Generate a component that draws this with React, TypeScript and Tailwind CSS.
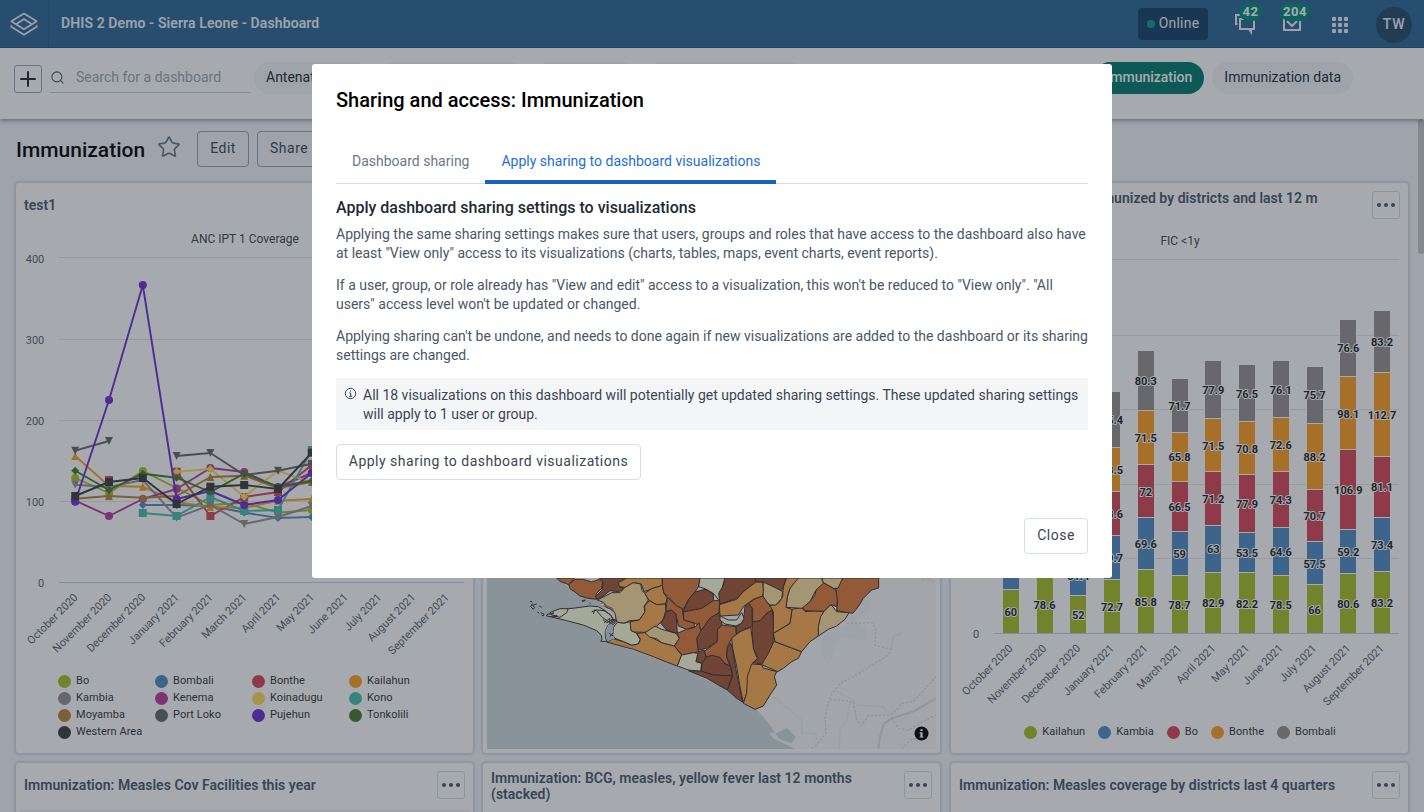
import type { ReactNode } from 'react';
import { Search, Star, Plus } from 'lucide-react';

const MONTHS = [
  'October 2020', 'November 2020', 'December 2020', 'January 2021', 'February 2021', 'March 2021',
  'April 2021', 'May 2021', 'June 2021', 'July 2021', 'August 2021', 'September 2021',
];

type Shape = 'circle' | 'diamond' | 'square' | 'up' | 'down';
type Series = { name: string; color: string; shape: Shape; ys: (number | null)[] };

const SERIES: Series[] = [
  { name: 'Bo', color: '#a8bf24', shape: 'circle', ys: [478, 493, 471, 488, 505, 502.7, 512.7, 510] },
  { name: 'Bombali', color: '#518cc3', shape: 'diamond', ys: [null, null, 505, 505, 506, 512.5, 518, 517] },
  { name: 'Bonthe', color: '#d74554', shape: 'square', ys: [null, 480, null, 471.7, 516, 497, 492, 465] },
  { name: 'Kailahun', color: '#ff9e21', shape: 'up', ys: [456, 486, 486.7, 502, 507, 508, 500.7, 499] },
  { name: 'Kambia', color: '#968f8f', shape: 'down', ys: [484.7, 487, 480, 517.7, 505, 524, 517, 506] },
  { name: 'Kenema', color: '#ba3ba1', shape: 'circle', ys: [500.7, 516, 499, 489, 468, 472, 487, 473] },
  { name: 'Koinadugu', color: '#ffda54', shape: 'diamond', ys: [null, null, null, 471.7, 469, 496.7, 470.7, 483] },
  { name: 'Kono', color: '#45beae', shape: 'square', ys: [null, null, 513, 516, 497, 511, 510, 450] },
  { name: 'Moyamba', color: '#b98037', shape: 'up', ys: [498.7, 496, 497.7, 496, 477, 475.7, 488, 482] },
  { name: 'Port Loko', color: '#676767', shape: 'down', ys: [450.7, 441, null, 456, 453, 475, 470.7, 463.7] },
  { name: 'Pujehun', color: '#6b2dd4', shape: 'circle', ys: [501.7, 400, 285, 499, 491, 505, 500, 473] },
  { name: 'Tonkolili', color: '#47792c', shape: 'diamond', ys: [470.7, 490, 473.7, 477.7, 492, 473.7, 486.7, 480.7] },
  { name: 'Western Area', color: '#3d3d3d', shape: 'square', ys: [496, 482, 478, 504, 486.7, 485, 489, 452.7] },
];

const STACK_COLORS = ['#a8bf24', '#518cc3', '#d74554', '#ff9e21', '#968f8f'];
const STACKS: number[][] = [
  [60, 50], [78.6, 60], [52, 51.4], [72.7, 59.7, 58.6, 58.5, 75.4],
  [85.8, 69.6, 72, 71.5, 80.3], [78.7, 59, 66.5, 65.8, 71.7], [82.9, 63, 71.2, 71.5, 77.9],
  [82.2, 53.5, 77.9, 70.8, 76.5], [78.5, 64.6, 74.3, 72.6, 76.1], [66, 57.5, 70.7, 88.2, 75.7],
  [80.6, 59.2, 106.9, 98.1, 76.6], [83.2, 73.4, 81.1, 112.7, 83.2],
];
const UNIT = 0.7465;

function marker(shape: Shape, x: number, y: number, color: string, key: string) {
  if (shape === 'circle') return <circle key={key} cx={x} cy={y} r={4} fill={color} />;
  if (shape === 'square') return <rect key={key} x={x - 4} y={y - 4} width={8} height={8} fill={color} />;
  const pts =
    shape === 'diamond'
      ? `${x},${y - 4} ${x + 4},${y} ${x},${y + 4} ${x - 4},${y}`
      : shape === 'up'
        ? `${x},${y - 4} ${x + 4},${y + 4} ${x - 4},${y + 4}`
        : `${x - 4},${y - 4} ${x + 4},${y - 4} ${x},${y + 4}`;
  return <polygon key={key} points={pts} fill={color} />;
}

function linePath(ys: (number | null)[]) {
  let d = '';
  let pen = false;
  ys.forEach((y, i) => {
    if (y === null) {
      pen = false;
      return;
    }
    d += `${pen ? 'L' : 'M'}${75.2 + i * 33.8} ${y}`;
    pen = true;
  });
  return d;
}

function MonthLabels({ x0, y }: { x0: number; y: number }) {
  return (
    <g fontSize={11} fill="#5c6068" textAnchor="end">
      {MONTHS.map((m, i) => (
        <text key={m} transform={`translate(${x0 + i * 33.75} ${y}) rotate(-45)`}>{m}</text>
      ))}
    </g>
  );
}

function LineChart() {
  return (
    <svg className="block h-[446px] w-[457px] shrink-0" viewBox="16 225 457 446">
      <text x={245} y={243} fontSize={12} fill="#444" textAnchor="middle">ANC IPT 1 Coverage</text>
      {[257.5, 339.5, 420.5, 501.5].map((y) => (
        <path key={y} d={`M59 ${y}H464`} stroke="#e6e6e6" />
      ))}
      <path d="M59 582.5H464" stroke="#c3cfea" />
      <g fontSize={11} fill="#5c6068" textAnchor="end">
        {['400', '300', '200', '100', '0'].map((t, i) => (
          <text key={t} x={44.3} y={262.7 + i * 81}>{t}</text>
        ))}
      </g>
      {SERIES.map((s) => (
        <g key={s.name}>
          <path d={linePath(s.ys)} fill="none" stroke={s.color} strokeWidth={1.9} strokeLinejoin="round" />
          {s.ys.map((y, i) => (y === null ? null : marker(s.shape, 75.2 + i * 33.8, y, s.color, `${i}`)))}
        </g>
      ))}
      <MonthLabels x0={78.5} y={598} />
    </svg>
  );
}

function StackedChart() {
  return (
    <svg className="block h-[495px] w-[457px] shrink-0" viewBox="951 225 457 495">
      <text x={1180} y={245} fontSize={12} fill="#444" textAnchor="middle">FIC &lt;1y</text>
      {[259.5, 335.5, 409.5, 484.5, 558.5].map((y) => (
        <path key={y} d={`M994 ${y}H1399`} stroke="#e6e6e6" />
      ))}
      {STACKS.map((col, i) => {
        const x = Math.round(1002.99 + i * 33.75);
        let base = 633.5;
        return (
          <g key={i}>
            {col.map((v, j) => {
              const top = base - v * UNIT;
              const snapped = Math.round(top) + 0.5;
              const bottom = Math.round(base) + 0.5;
              base = top;
              return (
                <rect key={j} x={x - 0.5} y={snapped} width={17} height={Math.min(bottom, 633.5) - snapped} fill={STACK_COLORS[j]} stroke="#fff" strokeWidth={1} />
              );
            })}
          </g>
        );
      })}
      <path d="M994 633.5H1399" stroke="#c3cfea" />
      <g fontSize={11} fontWeight={700} fill="#222" stroke="#fff" strokeWidth={2} strokeLinejoin="round" textAnchor="middle" paintOrder="stroke">
        {STACKS.map((col, i) => {
          let base = 633.5;
          return col.map((v, j) => {
            const h = v * UNIT;
            base -= h;
            return <text key={`${i}-${j}`} x={1010.8 + i * 33.75} y={base + h / 2 + 4.9}>{v}</text>;
          });
        })}
      </g>
      <text x={979.3} y={638} fontSize={11} fill="#5c6068" textAnchor="end">0</text>
      <MonthLabels x0={1013.5} y={649} />
    </svg>
  );
}

const DARK = '#a65834';
const BROWN = '#df7b39';
const ORANGE = '#fdac4f';
const TAN = '#fdde9c';
const PALE = '#fdffd9';

const REGIONS: [string, string][] = [
  [BROWN, '230,24 283,24 266,44 240,34'],
  [BROWN, '266,44 285,28 310,28 335,36 358,28 368,35 365,55 348,72 350,88 320,84 300,78 285,66 270,56'],
  [DARK, '358,24 440,24 415,38 420,52 438,54 415,65 390,62 370,78 352,88 346,80 366,60 370,35'],
  [ORANGE, '440,24 547,24 547,46 520,55 492,65 484,42 460,38 437,52 418,50 415,38'],
  [TAN, '352,90 372,80 395,68 420,68 435,52 460,38 482,42 486,62 497,72 505,90 492,110 495,125 478,150 450,152 432,160 410,156 405,130 395,118 378,112 372,98'],
  [ORANGE, '547,46 552,70 562,85 556,102 530,104 508,92 494,70 515,56'],
  [ORANGE, '508,92 530,104 556,102 558,125 548,150 525,175 495,187 460,186 452,180 450,155 478,150 495,125 494,108'],
  [PALE, '198,137 215,125 240,116 265,116 285,114 300,112 330,108 355,110 375,122 392,135 404,155 384,165 376,182 376,200 380,214 362,214 366,208 364,195 350,182 310,165 260,152'],
  [PALE, '412,157 432,160 450,155 453,182 470,190 480,208 475,222 455,226 430,215 405,205 398,195 400,172'],
  [ORANGE, '380,216 400,206 430,215 455,226 475,222 482,208 470,190 495,188 510,200 545,218 583,228 605,255 592,288 560,276 520,260 460,238'],
  [TAN, '495,188 525,168 545,178 588,190 598,205 583,228 545,218 530,206 510,202'],
  [DARK, '556,126 575,120 588,132 592,190 560,180 542,160 552,145'],
  [BROWN, '547,24 660,24 655,52 640,72 625,90 610,118 590,108 565,80 552,70 547,46'],
  [PALE, '660,24 735,24 725,60 720,95 700,70 675,56 656,50'],
  [DARK, '675,58 700,72 700,92 680,110 665,115 608,126 625,90 645,66'],
  [BROWN, '562,82 590,108 608,116 608,126 612,150 640,158 645,170 620,178 595,168 588,132 575,120 558,124'],
  [BROWN, '610,126 665,115 700,92 720,92 716,130 690,145 665,180 655,165 640,158 612,150'],
  [DARK, '720,128 692,142 672,170 650,200 655,240 680,235 712,212 716,180 726,165'],
  [BROWN, '592,190 620,178 645,172 657,158 662,185 650,205 655,245 608,256 583,228 598,205'],
  [BROWN, '680,238 712,215 712,180 725,165 768,170 768,190 755,205 742,230 740,262 750,288 735,280 720,265 695,257 680,262 672,246'],
  [PALE, '605,255 640,248 655,250 648,275 665,280 662,304 625,300 592,288'],
  [DARK, '655,245 672,240 678,258 668,280 648,274'],
  [DARK, '678,262 695,256 720,262 735,282 750,288 758,318 700,315 664,304 666,280'],
  [DARK, '625,302 664,304 700,315 756,318 742,360 720,348 680,325'],
  [DARK, '742,235 752,218 758,240 768,300 778,350 788,396 770,385 742,360 758,318 752,285 740,262'],
  [ORANGE, '755,205 780,185 812,172 818,215 825,250 832,265 818,282 810,320 800,370 790,398 780,350 770,290 758,235'],
  [ORANGE, '815,282 845,284 850,294 890,305 883,320 890,345 870,375 850,408 825,418 790,400 800,370 802,320'],
  [DARK, '815,155 840,152 865,125 877,122 880,150 880,210 875,240 845,282 818,278 835,265 820,235'],
  [ORANGE, '845,284 865,250 882,214 965,245 955,265 935,275 910,295 893,305'],
  [ORANGE, '880,190 930,160 936,118 965,112 975,125 1010,122 1032,124 1018,160 1015,198 990,215 965,245 885,215'],
  [TAN, '1032,124 1052,104 1060,112 1070,125 1107,128 1095,148 1070,168 1045,178 1015,198 1015,170 1022,140'],
  [BROWN, '1068,55 1088,24 1196,24 1196,54 1175,60 1150,85 1135,110 1118,130 1070,122 1072,100 1066,80'],
  [TAN, '1025,24 1088,24 1074,55 1060,55 1030,38'],
  [BROWN, '1030,38 1060,55 1068,60 1072,90 1070,110 1052,104 1032,124 975,122 965,110 990,95 1005,75 1010,50'],
  [TAN, '950,24 1025,24 1030,40 1008,60 990,95 965,115 918,112 922,80 930,55'],
  [ORANGE, '920,24 955,24 930,55 922,80 918,112 936,118 930,160 880,190 880,125 868,108 895,100 908,80 910,50'],
  [TAN, '850,35 870,40 908,65 905,85 888,105 870,105 850,85 848,60'],
  [DARK, '735,24 825,24 828,36 790,65 770,85 720,102 716,70 728,50'],
  [ORANGE, '828,36 848,36 850,60 848,78 820,88 790,110 775,135 720,138 718,104 770,88 790,65'],
  [DARK, '825,24 918,24 910,50 905,62 890,55 850,36 828,34'],
  [BROWN, '822,88 848,78 868,106 878,120 862,128 840,152 818,155 818,115 805,102'],
  [DARK, '795,108 805,100 816,115 817,170 790,178 770,192 768,170 785,160 792,135'],
  [PALE, '720,138 745,150 770,150 785,128 792,145 784,160 768,168 735,162 720,150'],
];

function MapView() {
  return (
    <div className="relative h-[171px] w-[449px] overflow-hidden bg-[#d1d9dc]">
      <svg className="block h-[171px] w-[449px]" viewBox="21 24 1347 513">
        <path
          d="M230 24L285 68L350 88L405 155L380 214L592 288L742 360L828 418L850 440L870 465L885 488L866 488L880 505L945 537H1368V24Z"
          fill="#f8f8f9"
        />
        <path d="M885 492L920 474L948 500L935 520L900 508Z" fill="#d1d9dc" />
        <path d="M1115 70L1175 95L1170 125L1120 150L1160 180V215L1080 200L1045 285L1020 250L1030 195L1110 160Z" fill="#f1f4f4" />
        <g fill="none" stroke="#e4d7d9" strokeWidth={4} strokeDasharray="7 5">
          <path d="M1100 160L1175 158L1188 175L1185 225L1232 238L1225 255L1120 320L1080 340L1050 380L1035 440L1038 490L1010 525L990 537" />
          <path d="M1050 388L1120 395L1130 450L1145 467L1165 437L1230 435L1250 420L1265 400L1300 395L1368 320" />
          <path d="M1235 445L1255 475L1285 480L1320 460L1368 435" />
          <path d="M1265 537L1290 510L1330 500" />
          <path d="M1325 30L1345 24L1362 38" />
        </g>
        <g fill="none" stroke="#eceef0" strokeWidth={4}>
          <path d="M1232 238L1240 200L1265 190M880 380L930 420L965 450L965 490L1005 490L1010 510M1060 360L1120 390L1130 405L1210 410L1220 425M1110 395L1100 450L1080 480L1078 537" />
        </g>
        <path d="M1368 385L1300 425L1235 445L1212 460L1200 500L1195 537" fill="none" stroke="#dddfe2" strokeWidth={6} />
        <g stroke="#3b3230" strokeWidth={3} strokeLinejoin="round">
          {REGIONS.map(([fill, points], i) => (
            <polygon key={i} points={points} fill={fill} />
          ))}
        </g>
        <path d="M376 182L384 165L404 155L398 172L400 195L404 205L384 214L378 205Z" fill="#cdd3e6" />
        <g fill="none" stroke="#33383c" strokeWidth={3}>
          <path d="M265 116L260 128L240 142L218 138M335 125L350 120L372 122L392 135L398 148L385 155L365 140L350 122M345 118L340 132M368 148L380 158L395 150L405 162M372 158L390 145L388 160M395 148L410 152L400 164L390 158L408 146M388 190L400 198M400 188L390 200" />
          <path d="M306 92L316 90L310 96ZM150 94L156 95M158 100L152 110L160 118L164 112L158 106L170 102M178 108L185 112M172 126L178 130M182 128L192 132L190 138L184 134M206 133L222 128L212 134L232 138L205 140M328 98L332 102" />
          <path d="M362 100L372 98L380 108L396 114L402 124L394 122L384 112L370 108" stroke="#8d6a45" />
        </g>
      </svg>
      <svg className="absolute right-[7px] bottom-[8px] h-[15px] w-[15px]" viewBox="0 0 15 15">
        <circle cx={7.5} cy={7.5} r={7} fill="#000" />
        <path d="M6.3 3.2h2.3v1.9H6.3zM5.6 6.2h3v4.2h.9v1.2H5.6v-1.2h.8V7.4h-.8z" fill="#fff" />
      </svg>
    </div>
  );
}

function Dot({ color }: { color: string }) {
  return <span className="h-[13px] w-[13px] shrink-0 rounded-full" style={{ backgroundColor: color }} />;
}

function MoreButton() {
  return (
    <div className="flex h-7 w-7 shrink-0 items-center justify-center gap-[3px] rounded-[3px] border border-[#d5dde5]">
      <span className="h-1 w-1 rounded-full bg-[#4a5768]" />
      <span className="h-1 w-1 rounded-full bg-[#4a5768]" />
      <span className="h-1 w-1 rounded-full bg-[#4a5768]" />
    </div>
  );
}

function Card({ title, more, children, tall }: { title: ReactNode; more?: boolean; children?: ReactNode; tall?: boolean }) {
  return (
    <section className={`flex w-[459px] flex-col overflow-hidden rounded-[4px] border border-[#d9dde2] bg-white shadow-[0_0_3px_rgba(0,0,0,0.22)] ${tall ? 'h-[572px]' : 'h-[300px]'}`}>
      <header className="flex h-[42px] shrink-0 items-start justify-between px-2 pt-2">
        <h3 className="flex min-h-7 max-w-[400px] items-center text-[14px] leading-4 font-semibold tracking-[0.02px] text-[#4a5768]">{title}</h3>
        {more && <MoreButton />}
      </header>
      {children}
    </section>
  );
}

function HeaderBar() {
  return (
    <header className="flex h-12 shrink-0 items-center border-b border-[#22567f] bg-[#2c6693] text-white">
      <div className="flex h-full w-[49px] items-center justify-center border-r border-[#25597f]">
        <svg className="h-6 w-7" viewBox="31 34 84 72" fill="none" stroke="#e8edf2" strokeWidth={5.5} strokeLinejoin="round">
          <path d="M73 38.500L111 62L73 86L35 62Z" />
          <path d="M35 74V78L73 102L111 78V74" />
          <path d="M50 70L73 55L96 70" />
        </svg>
      </div>
      <h1 className="grow pl-3 text-[14px] font-semibold tracking-[0.11px] text-[#eef2f6]">DHIS 2 Demo - Sierra Leone - Dashboard</h1>
      <div className="mr-[25px] flex h-8 w-[70px] items-center justify-center gap-1 rounded-[4px] bg-[#154066] pb-[1px] text-[14px] tracking-[0.2px] text-[#eef2f6]">
        <span className="mt-[2px] h-2 w-2 rounded-full bg-[#0c9a86]" />
        Online
      </div>
      <div className="relative mr-[25px] h-6 w-[24px]">
        <svg className="h-6 w-6" viewBox="0 0 24 24" fill="none" stroke="#eef2f6" strokeWidth={2}>
          <path d="M7 3H3v9H4.500" />
          <path d="M7 7V17H16L18 20V17H21V7Z" />
        </svg>
        <span className="absolute -top-[9px] left-[6px] flex h-[18px] w-[23px] items-center justify-center rounded-full bg-[#00897b] text-[13px] font-bold tracking-[0.5px]">42</span>
      </div>
      <div className="relative mr-[30px] h-6 w-[20px]">
        <svg className="h-6 w-5" viewBox="0 0 20 24" fill="none" stroke="#eef2f6" strokeWidth={2}>
          <path d="M2 5v13h16V5M5 9l5 5 5-5" />
        </svg>
        <span className="absolute -top-[9px] -left-[2px] flex h-[18px] w-[30px] items-center justify-center rounded-full bg-[#00897b] text-[13px] font-bold tracking-[0.5px]">204</span>
      </div>
      <div className="mr-[28px] grid grid-cols-3 gap-[2px] pt-[2px]">
        {Array.from({ length: 9 }, (_, i) => (
          <span key={i} className="h-1 w-1 rounded-[1px] bg-[#eef2f6]" />
        ))}
      </div>
      <div className="mt-[2px] mr-3 flex h-9 w-9 items-center justify-center rounded-full bg-[#234968] pb-[1px] text-[14px] font-medium tracking-[0.8px] text-[#eef2f6]">TW</div>
    </header>
  );
}

function DashboardsBar() {
  return (
    <nav className="relative z-10 flex h-[71px] shrink-0 items-start overflow-hidden bg-white pt-[14px] pl-[14px] shadow-[0_2px_4px_rgba(0,0,0,0.35)]">
      <div className="mt-[3px] flex h-7 w-7 items-center justify-center rounded-[3px] border border-[#93a2b5]">
        <Plus className="h-6 w-6 text-[#212934]" strokeWidth={2} />
      </div>
      <div className="ml-2 flex h-[31px] w-[200px] items-center border-b border-[#c8cdd3]">
        <Search className="h-[15px] w-[15px] text-[#4a5768]" strokeWidth={1.7} />
        <span className="ml-[11px] text-[14px] text-[#a0a4ab]">Search for a dashboard</span>
      </div>
      <div className="ml-1 flex gap-2 text-[14px] whitespace-nowrap text-[#212934]">
        <span className="flex h-8 items-center rounded-full bg-[#f3f5f7] px-3 pb-[2px]">Antenatal Care</span>
        <span className="h-8 w-[148px] rounded-full bg-[#f3f5f7]" />
        <span className="h-8 w-[104px] rounded-full bg-[#f3f5f7]" />
        <span className="h-8 w-[160px] rounded-full bg-[#f3f5f7]" />
      </div>
      <div className="mr-[71px] ml-auto flex gap-2 text-[14px]">
        <span className="flex h-8 items-center rounded-full bg-[#00796b] px-3 pb-[2px] font-medium text-white">Immunization</span>
        <span className="flex h-8 items-center rounded-full bg-[#f3f5f7] px-3 pb-[2px] text-[#212934]">Immunization data</span>
      </div>
    </nav>
  );
}

function SharingModal() {
  return (
    <div className="flex h-[514px] w-[800px] flex-col rounded-[3px] bg-white px-6">
      <h2 className="mt-6 text-[20px] leading-6 font-medium text-black">Sharing and access: Immunization</h2>
      <div className="mt-[27px] flex h-[45px] border-b border-[#d5dde5] text-[14px]">
        <div className="h-[45px] px-4 pt-[12px] leading-5 text-[#6c7787]">Dashboard sharing</div>
        <div className="h-[45px] border-b-4 border-[#1565c0] px-4 pt-[12px] leading-5 text-[#1f6fd0]">
          Apply sharing to dashboard visualizations
        </div>
      </div>
      <h3 className="mt-[14px] text-[16px] leading-5 font-medium text-[#212934]">Apply dashboard sharing settings to visualizations</h3>
      <div className="mt-[7px] flex flex-col gap-[13px] text-[14px] leading-[19px] text-[#4a5768]">
        <p>
          Applying the same sharing settings makes sure that users, groups and roles that have access to the dashboard also have
          <br />
          at least "View only" access to its visualizations (charts, tables, maps, event charts, event reports).
        </p>
        <p>
          If a user, group, or role already has "View and edit" access to a visualization, this won't be reduced to "View only". "All
          <br />
          users" access level won't be updated or changed.
        </p>
        <p>
          Applying sharing can't be undone, and needs to done again if new visualizations are added to the dashboard or its sharing
          <br />
          settings are changed.
        </p>
      </div>
      <div className="mt-[13px] flex h-[52px] rounded-[3px] bg-[#f3f5f7] pt-2 pl-2 text-[14px] leading-[19px] text-[#3b4654]">
        <svg className="mt-[1px] mr-[6px] h-[13px] w-[13px] shrink-0" viewBox="0 0 13 13" fill="none" stroke="#3b4654">
          <circle cx={6.5} cy={6.5} r={5.2} />
          <path d="M5.300 6H6.700V9.200M5 9.300H8.200M6.500 3.500V4.700" />
        </svg>
        <p className="whitespace-nowrap">
          All 18 visualizations on this dashboard will potentially get updated sharing settings. These updated sharing settings
          <br />
          will apply to 1 user or group.
        </p>
      </div>
      <button className="mt-[14px] h-9 w-[305px] rounded-[4px] border border-[#d5dde5] pb-[2px] text-[14px] tracking-[0.5px] whitespace-nowrap text-[#3b4654]">
        Apply sharing to dashboard visualizations
      </button>
      <button className="mt-auto mb-6 h-9 w-16 self-end rounded-[4px] border border-[#d5dde5] pb-[2px] text-[14px] tracking-[0.5px] text-[#3b4654]">
        Close
      </button>
    </div>
  );
}

export default function App() {
  return (
    <div className="relative flex h-[812px] w-[1424px] flex-col overflow-hidden bg-[#f3f5fa] font-['Roboto',sans-serif]">
      <HeaderBar />
      <DashboardsBar />
      <div className="flex min-h-0 grow">
        <main className="w-[1418px] shrink-0 overflow-hidden pl-[15px]">
          <div className="flex h-[63px] items-start pt-3 pl-px">
            <h2 className="mt-1 text-[21px] leading-[30px] font-medium text-black">Immunization</h2>
            <Star className="mt-1 ml-3 h-6 w-6 text-[#6c7787]" strokeWidth={1.7} />
            <button className="ml-4 h-9 w-[52px] rounded-[4px] border border-[#93a2b5] pb-[2px] text-[14px] tracking-[0.5px] text-[#3b4654]">Edit</button>
            <button className="ml-2 h-9 w-[64px] rounded-[4px] border border-[#93a2b5] pb-[2px] text-[14px] tracking-[0.5px] text-[#3b4654]">Share</button>
          </div>
          <div className="grid w-[1394px] grid-cols-[467px_468px_459px] gap-y-2">
            <Card title="test1" tall>
              <LineChart />
              <div className="mt-[2px] ml-[42px] grid grid-cols-[97px_97px_97px_97px] text-[11px] tracking-[0.05px] text-[#333]">
                {SERIES.map((s) => (
                  <div key={s.name} className="flex h-[17px] items-center gap-[5px] whitespace-nowrap">
                    <Dot color={s.color} />
                    {s.name}
                  </div>
                ))}
              </div>
            </Card>
            <Card title="" tall>
              <div className="mt-auto mb-1 flex px-1">
                <MapView />
              </div>
            </Card>
            <Card title={<span className="-mt-px pb-[17px]">Immunization: Fully immunized by districts and last 12 m</span>} more tall>
              <StackedChart />
              <div className="mt-px flex h-[22px] items-center justify-center gap-[13px] pl-px text-[11px] tracking-[0.05px] text-[#333]">
                {['Kailahun', 'Kambia', 'Bo', 'Bonthe', 'Bombali'].map((n, i) => (
                  <div key={n} className="flex items-center gap-[5px]">
                    <Dot color={STACK_COLORS[i]} />
                    {n}
                  </div>
                ))}
              </div>
            </Card>
            <Card title="Immunization: Measles Cov Facilities this year" more>
              <div className="mx-1 mt-1 grow bg-[#f6f4f6]" />
            </Card>
            <Card title={<span className="-mt-px">Immunization: BCG, measles, yellow fever last 12 months (stacked)</span>} more />
            <Card title="Immunization: Measles coverage by districts last 4 quarters" more />
          </div>
        </main>
        <div className="w-[6px] shrink-0">
          <div className="h-[135px] rounded-[3px] bg-[#c4c6c9]" />
        </div>
      </div>
      <div className="absolute inset-0 z-20 flex items-start justify-center bg-[rgba(33,43,54,0.4)] pt-16">
        <SharingModal />
      </div>
    </div>
  );
}
